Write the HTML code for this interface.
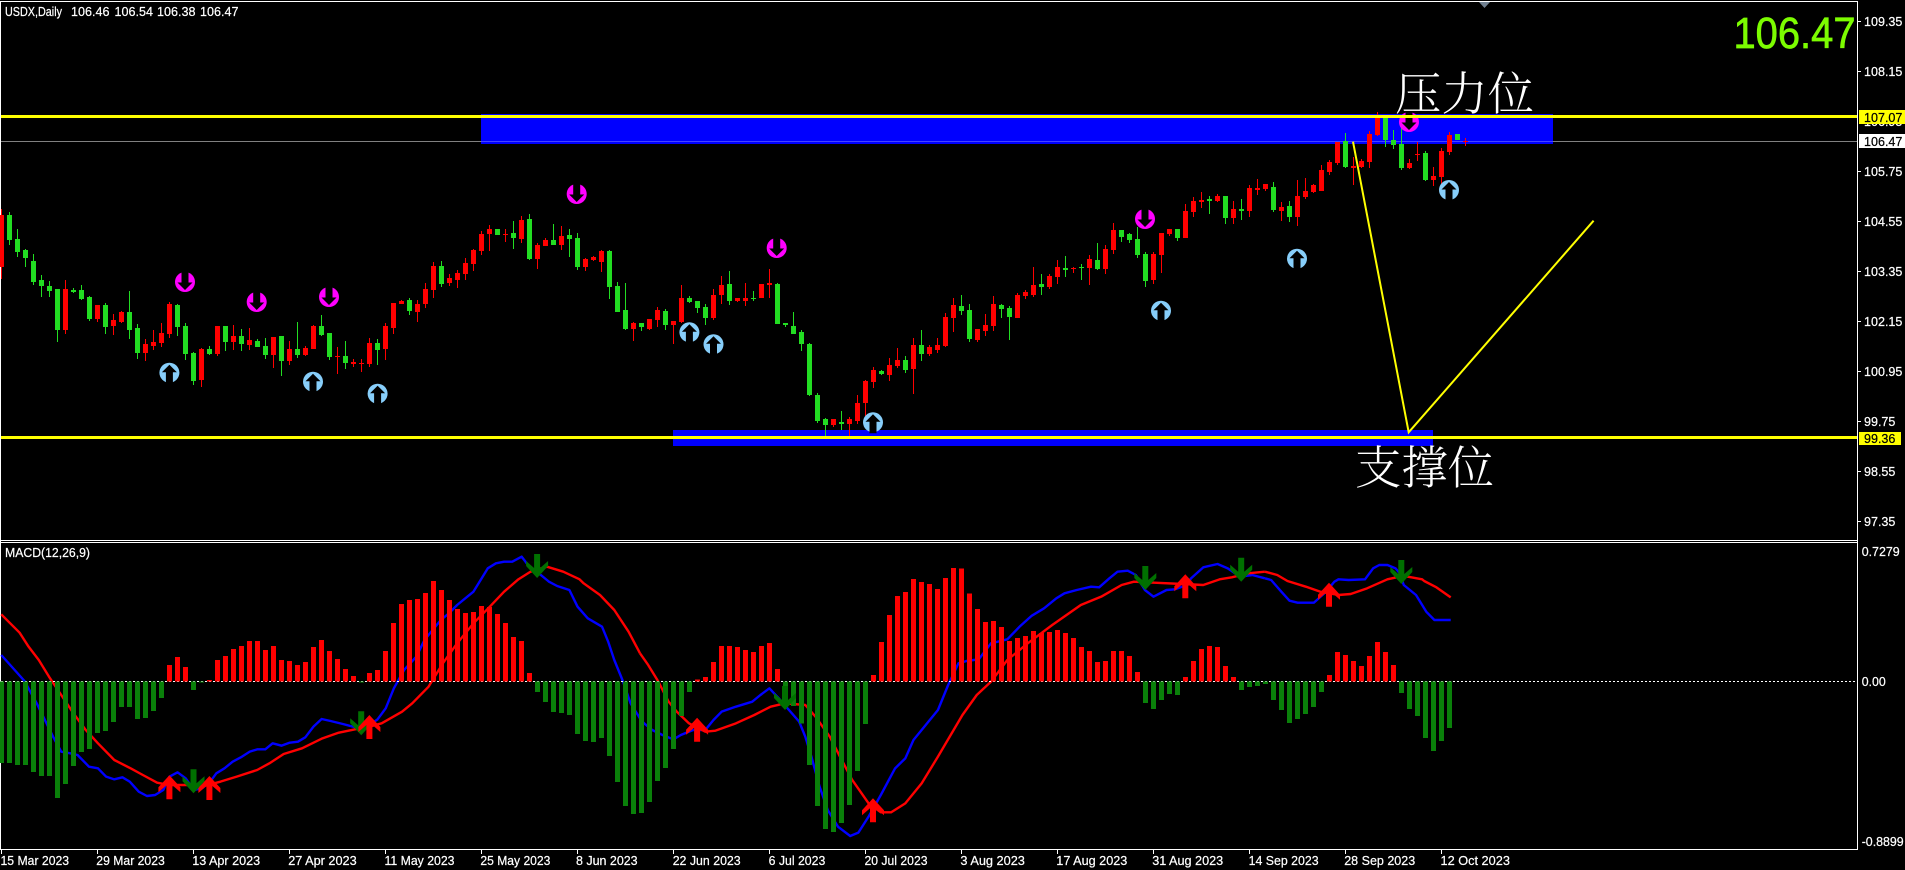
<!DOCTYPE html>
<html><head><meta charset="utf-8"><title>USDX,Daily</title>
<style>
html,body{margin:0;padding:0;background:#000;width:1905px;height:870px;overflow:hidden}
svg{display:block;position:absolute;left:0;top:0}
text{font-family:"Liberation Sans",sans-serif;fill:#fff;font-size:13px;stroke:#fff;stroke-width:.22px}
.cjk{font-family:"Liberation Serif","Noto Serif CJK SC",serif;font-size:46px;font-weight:300;stroke:none}
.k{fill:#000;stroke:#000}
</style></head><body>
<svg width="1905" height="870" viewBox="0 0 1905 870" xmlns="http://www.w3.org/2000/svg">
<defs>
<g id="m"><ellipse rx="10" ry="10" fill="#f0f"/><path d="M-3.5-11H3.5V0.5L7.5 0.5L0 8L-7.5 0.5L-3.5 0.5Z" fill="#000"/></g>
<g id="b"><ellipse rx="10" ry="10" fill="#87cefa"/><path d="M-3.5 11H3.5V-0.5L7.5-0.5L0-8L-7.5-0.5L-3.5-0.5Z" fill="#000"/></g>
<path id="u" d="M0 0L11 12V17L3 10V24H-3V10L-11 17V12Z" fill="#f00"/>
<path id="d" d="M0 0L11-12V-17L3-10V-24H-3V-10L-11-17V-12Z" fill="#007000"/>
</defs>
<rect width="1905" height="870" fill="#000"/>

<!-- frame -->
<g fill="#fff" shape-rendering="crispEdges">
<rect x="0" y="1" width="1858" height="1"/>
<rect x="0" y="1" width="1" height="849"/>
<rect x="1857" y="1" width="1" height="849"/>
<rect x="0" y="540" width="1858" height="1"/>
<rect x="0" y="542" width="1858" height="1"/>
<rect x="0" y="849" width="1858" height="1"/>
<path d="M1858 21h3v1h-3zM1858 71h3v1h-3zM1858 171h3v1h-3zM1858 221h3v1h-3zM1858 271h3v1h-3zM1858 321h3v1h-3zM1858 371h3v1h-3zM1858 421h3v1h-3zM1858 471h3v1h-3zM1858 521h3v1h-3z"/>
<path d="M1 850h1v4h-1zM97 850h1v4h-1zM193 850h1v4h-1zM289 850h1v4h-1zM385 850h1v4h-1zM481 850h1v4h-1zM577 850h1v4h-1zM673 850h1v4h-1zM769 850h1v4h-1zM865 850h1v4h-1zM961 850h1v4h-1zM1057 850h1v4h-1zM1153 850h1v4h-1zM1249 850h1v4h-1zM1345 850h1v4h-1zM1441 850h1v4h-1z"/>
</g>
<polygon points="1479,2 1490,2 1484.5,8" fill="#708090"/>

<!-- zones -->
<g shape-rendering="crispEdges">
<rect x="481" y="114" width="1072" height="30" fill="#00f"/>
<rect x="673" y="430" width="760" height="16" fill="#00f"/>
<rect x="1" y="141" width="1856" height="1" fill="#808080"/>
<rect x="481" y="141" width="1072" height="1" fill="#4444ff"/>
</g>

<!-- candles -->
<g shape-rendering="crispEdges">
<path fill="none" stroke="#f00" d="M1.5 209V279M65.5 280V334M97.5 305V322M113.5 314V335M121.5 311V323M145.5 339V361M153.5 330V350M161.5 323V347M169.5 302V338M201.5 348V387M217.5 326V356M233.5 325V350M249.5 328V350M273.5 337V368M289.5 341V365M305.5 346V356M313.5 325V349M337.5 347V374M353.5 359V367M361.5 359V372M369.5 338V367M385.5 323V360M393.5 303V334M401.5 300V304M417.5 300V322M425.5 283V308M433.5 262V298M449.5 274V286M457.5 270V288M465.5 258V280M473.5 249V271M481.5 231V255M489.5 225V251M505.5 229V242M521.5 216V243M537.5 243V269M545.5 238V246M561.5 226V250M585.5 258V271M593.5 256V261M601.5 250V272M633.5 322V341M649.5 319V330M657.5 307V327M673.5 321V344M681.5 285V323M713.5 289V320M721.5 276V304M737.5 298V302M745.5 283V306M761.5 284V298M769.5 269V298M833.5 419V427M849.5 417V436M857.5 395V424M865.5 380V416M873.5 367V388M889.5 358V381M897.5 348V368M913.5 338V394M929.5 345V356M937.5 338V353M945.5 313V347M953.5 298V332M977.5 329V342M985.5 314V336M993.5 296V331M1017.5 293V318M1025.5 290V299M1033.5 267V297M1049.5 274V289M1057.5 260V284M1073.5 267V273M1089.5 255V285M1105.5 245V274M1113.5 223V254M1153.5 252V284M1161.5 233V273M1169.5 229V236M1185.5 204V238M1193.5 197V217M1201.5 192V208M1217.5 194V202M1233.5 201V224M1249.5 185V217M1257.5 179V195M1265.5 184V191M1281.5 202V221M1297.5 180V226M1305.5 178V199M1313.5 184V193M1321.5 165V191M1329.5 160V175M1337.5 142V165M1353.5 157V185M1361.5 159V168M1369.5 131V168M1377.5 112V136M1409.5 159V169M1417.5 142V161M1433.5 167V186M1441.5 148V184M1449.5 132V155M1465.5 138V146"/>
<path fill="#f00" d="M-1 215h5V267h-5zM63 289h5V330h-5zM95 305h5V319h-5zM111 320h5V326h-5zM119 312h5V322h-5zM143 344h5V353h-5zM151 342h5V346h-5zM159 333h5V343h-5zM167 304h5V334h-5zM199 349h5V380h-5zM215 326h5V354h-5zM231 336h5V342h-5zM247 340h5V345h-5zM271 337h5V355h-5zM287 349h5V361h-5zM303 348h5V355h-5zM311 326h5V349h-5zM335 356h5V357h-5zM351 362h5V364h-5zM359 363h5V364h-5zM367 343h5V364h-5zM383 326h5V349h-5zM391 303h5V328h-5zM399 301h5V304h-5zM415 304h5V312h-5zM423 289h5V304h-5zM431 266h5V290h-5zM447 278h5V283h-5zM455 273h5V280h-5zM463 263h5V274h-5zM471 250h5V264h-5zM479 234h5V251h-5zM487 229h5V234h-5zM503 234h5V235h-5zM519 220h5V239h-5zM535 245h5V259h-5zM543 240h5V246h-5zM559 236h5V245h-5zM583 259h5V267h-5zM591 257h5V260h-5zM599 251h5V262h-5zM631 323h5V329h-5zM647 319h5V329h-5zM655 310h5V320h-5zM671 321h5V325h-5zM679 298h5V322h-5zM711 295h5V318h-5zM719 285h5V295h-5zM735 298h5V301h-5zM743 298h5V301h-5zM759 284h5V298h-5zM767 283h5V285h-5zM831 419h5V425h-5zM847 419h5V424h-5zM855 403h5V421h-5zM863 381h5V403h-5zM871 370h5V382h-5zM887 365h5V375h-5zM895 360h5V366h-5zM911 345h5V369h-5zM927 347h5V354h-5zM935 345h5V350h-5zM943 317h5V346h-5zM951 305h5V318h-5zM975 329h5V340h-5zM983 325h5V331h-5zM991 304h5V326h-5zM1015 295h5V318h-5zM1023 292h5V296h-5zM1031 285h5V295h-5zM1047 276h5V287h-5zM1055 267h5V277h-5zM1071 268h5V269h-5zM1087 259h5V268h-5zM1103 249h5V269h-5zM1111 230h5V250h-5zM1151 254h5V280h-5zM1159 233h5V255h-5zM1167 229h5V234h-5zM1183 211h5V238h-5zM1191 201h5V212h-5zM1199 200h5V202h-5zM1215 196h5V201h-5zM1231 209h5V218h-5zM1247 188h5V211h-5zM1255 188h5V190h-5zM1263 184h5V189h-5zM1279 207h5V211h-5zM1295 196h5V217h-5zM1303 191h5V197h-5zM1311 185h5V192h-5zM1319 170h5V191h-5zM1327 162h5V172h-5zM1335 142h5V163h-5zM1351 166h5V168h-5zM1359 161h5V167h-5zM1367 134h5V162h-5zM1375 117h5V135h-5zM1407 163h5V168h-5zM1415 154h5V155h-5zM1431 176h5V180h-5zM1439 151h5V177h-5zM1447 135h5V152h-5zM1463 141h5V142h-5z"/>
<path fill="none" stroke="#22dd22" d="M9.5 212V245M17.5 229V257M25.5 249V267M33.5 254V285M41.5 275V297M49.5 281V297M57.5 289V342M73.5 288V293M81.5 285V300M89.5 296V321M105.5 303V334M129.5 291V339M137.5 324V359M177.5 304V336M185.5 323V360M193.5 352V385M209.5 346V355M225.5 326V351M241.5 329V351M257.5 339V347M265.5 338V359M281.5 336V376M297.5 322V358M321.5 315V336M329.5 333V360M345.5 341V369M377.5 339V365M409.5 298V315M441.5 261V287M513.5 221V249M529.5 214V260M553.5 224V245M569.5 229V257M577.5 233V270M609.5 250V299M617.5 282V312M625.5 283V330M641.5 323V331M665.5 309V330M689.5 296V303M697.5 301V313M705.5 304V325M729.5 271V305M753.5 291V301M777.5 283V324M785.5 323V327M793.5 312V334M801.5 330V351M809.5 343V396M817.5 393V423M825.5 418V436M841.5 411V430M881.5 370V375M905.5 356V373M921.5 330V361M961.5 295V315M969.5 304V342M1001.5 304V318M1009.5 306V340M1041.5 274V295M1065.5 256V277M1081.5 264V280M1097.5 243V270M1121.5 230V242M1129.5 233V243M1137.5 227V258M1145.5 252V287M1177.5 229V241M1209.5 196V214M1225.5 196V224M1241.5 199V220M1273.5 182V212M1289.5 201V222M1345.5 133V168M1385.5 115V147M1393.5 130V149M1401.5 128V170M1425.5 151V181"/>
<path fill="#22dd22" d="M7 215h5V240h-5zM15 239h5V252h-5zM23 250h5V258h-5zM31 261h5V282h-5zM39 280h5V286h-5zM47 286h5V291h-5zM55 289h5V330h-5zM71 290h5V292h-5zM79 290h5V299h-5zM87 297h5V319h-5zM103 305h5V327h-5zM127 312h5V330h-5zM135 328h5V353h-5zM175 305h5V327h-5zM183 326h5V354h-5zM191 353h5V381h-5zM207 349h5V354h-5zM223 326h5V342h-5zM239 336h5V344h-5zM255 341h5V347h-5zM263 346h5V355h-5zM279 336h5V361h-5zM295 349h5V355h-5zM319 326h5V335h-5zM327 333h5V357h-5zM343 356h5V363h-5zM375 343h5V350h-5zM407 300h5V311h-5zM439 266h5V284h-5zM495 229h5V235h-5zM511 233h5V238h-5zM527 219h5V259h-5zM551 240h5V245h-5zM567 235h5V239h-5zM575 238h5V267h-5zM607 251h5V287h-5zM615 286h5V312h-5zM623 310h5V329h-5zM639 323h5V327h-5zM663 311h5V325h-5zM687 298h5V302h-5zM695 301h5V308h-5zM703 307h5V318h-5zM727 284h5V301h-5zM751 298h5V299h-5zM775 284h5V324h-5zM783 323h5V325h-5zM791 326h5V334h-5zM799 332h5V344h-5zM807 344h5V395h-5zM815 395h5V421h-5zM823 419h5V425h-5zM839 422h5V424h-5zM879 371h5V374h-5zM903 360h5V370h-5zM919 345h5V354h-5zM959 306h5V311h-5zM967 310h5V339h-5zM999 305h5V309h-5zM1007 308h5V317h-5zM1039 284h5V287h-5zM1063 268h5V270h-5zM1079 267h5V268h-5zM1095 260h5V269h-5zM1119 230h5V237h-5zM1127 234h5V240h-5zM1135 239h5V255h-5zM1143 254h5V281h-5zM1175 229h5V238h-5zM1207 199h5V201h-5zM1223 196h5V218h-5zM1239 209h5V211h-5zM1271 187h5V210h-5zM1287 206h5V217h-5zM1343 141h5V167h-5zM1383 117h5V140h-5zM1391 140h5V145h-5zM1399 144h5V168h-5zM1423 153h5V180h-5zM1455 134h5V140h-5z"/>
</g>

<!-- markers -->
<use href="#m" x="185" y="282"/><use href="#m" x="256.7" y="302"/><use href="#m" x="329" y="297"/><use href="#m" x="576.7" y="194"/><use href="#m" x="776.7" y="248"/><use href="#m" x="1145" y="219"/><use href="#m" x="1409" y="122"/>
<use href="#b" x="169.4" y="372.7"/><use href="#b" x="313" y="381.7"/><use href="#b" x="377.6" y="393.7"/><use href="#b" x="689.4" y="332.3"/><use href="#b" x="713.5" y="344.3"/><use href="#b" x="873" y="422.3"/><use href="#b" x="1161" y="310.7"/><use href="#b" x="1297" y="258.7"/><use href="#b" x="1449" y="190"/>

<!-- levels -->
<g shape-rendering="crispEdges" fill="#ff0">
<rect x="1" y="115" width="1856" height="3"/>
<rect x="1" y="436" width="1856" height="3"/>
</g>
<polyline points="1353,141.7 1408.7,432.3 1593.6,220.7" fill="none" stroke="#ff0" stroke-width="2"/>

<!-- MACD lines -->
<g fill="none" stroke-linejoin="round">
<g transform="translate(0,580) scale(.40816,.33333)">
<polyline stroke="#00f" stroke-width="2.4" vector-effect="non-scaling-stroke" points="3,225 25,255 60,303 90,370 110,420 130,470 150,515 172,520 190,525 218,560 240,565 260,590 280,598 300,592 318,605 340,635 360,648 380,645 400,630 415,590 435,577 455,595 475,630 495,625 515,605 530,580 550,565 570,545 590,532 612,515 630,508 650,508 668,490 690,497 710,488 730,485 748,472 768,440 788,417 810,423 840,432 865,440 885,445 905,435 925,418 945,385 965,325 990,270 1020,230 1040,180 1060,150 1080,120 1100,100 1120,75 1140,55 1160,35 1180,-5 1195,-35 1215,-50 1235,-55 1255,-55 1278,-70 1300,-35 1320,-20 1340,0 1345,5 1365,18 1395,30 1415,80 1440,115 1475,140 1490,185 1505,240 1525,300 1545,370 1568,415"/>
<polyline stroke="#f00" stroke-width="2.4" vector-effect="non-scaling-stroke" points="3,103 25,130 48,158 70,200 95,240 120,290 150,345 180,400 210,450 240,490 280,540 320,565 350,585 385,608 415,615 460,615 500,618 540,605 580,590 630,570 660,550 695,522 740,505 790,475 830,458 870,448 905,440 935,430 985,395 1010,370 1050,320 1085,250 1120,190 1160,130 1200,80 1235,35 1270,-2 1300,-25 1340,-40 1380,-25 1420,-2 1430,10 1470,45 1505,90 1540,155 1568,220"/>
</g>
<g transform="translate(640,580) scale(.40816,.33333)">
<polyline stroke="#00f" stroke-width="2.4" vector-effect="non-scaling-stroke" points="0,415 10,430 30,450 55,465 82,478 100,465 130,450 160,450 180,420 200,395 235,380 275,365 295,345 317,325 340,355 365,390 390,425 405,470 420,530 440,620 460,690 485,740 515,768 535,758 560,710 590,645 625,565 650,535 670,480 700,435 730,390 755,315 780,250 800,243 830,238 860,190 900,178 930,140 960,107 990,85 1020,55 1040,40 1070,30 1105,20 1125,22 1150,-5 1170,-25 1195,-28 1215,-15 1237,30 1258,50 1290,30 1310,28 1340,15 1350,-5 1380,-38 1415,-48 1440,-35 1470,-10 1500,-15 1531,-5"/>
<polyline stroke="#f00" stroke-width="2.4" vector-effect="non-scaling-stroke" points="0,220 20,255 45,305 70,365 90,395 120,430 160,455 185,452 235,430 280,405 320,380 355,370 405,375 430,410 465,470 490,530 520,600 560,670 590,697 615,697 650,670 690,610 730,530 790,405 825,345 860,305 900,240 950,190 1010,135 1080,75 1130,50 1180,15 1210,5 1260,8 1330,12 1380,15 1420,-2 1450,-8 1490,-20 1531,-25"/>
</g>
<g transform="translate(1265,580) scale(.40816,.33333)">
<polyline stroke="#00f" stroke-width="2.4" vector-effect="non-scaling-stroke" points="0,-5 15,0 40,35 60,62 80,68 120,68 150,35 170,5 180,-2 205,0 245,-2 265,-35 280,-45 300,-45 320,-35 330,-20 340,15 370,45 395,95 415,120 455,120"/>
<polyline stroke="#f00" stroke-width="2.4" vector-effect="non-scaling-stroke" points="0,-25 30,-15 55,3 100,20 135,35 180,45 210,42 250,25 300,-2 330,-10 350,-10 385,-2 390,3 420,22 455,52"/>
</g>
</g>

<!-- zero line -->
<line x1="1" y1="681.5" x2="1857" y2="681.5" stroke="#fff" stroke-width="1" stroke-dasharray="2 2" shape-rendering="crispEdges"/>

<!-- histogram -->
<g transform="translate(0,580) scale(1,.33333)" shape-rendering="crispEdges">
<path fill="#f00" d="M167 255h5V304h-5zM175 231h5V304h-5zM183 261h5V304h-5zM207 300h5V304h-5zM215 240h5V304h-5zM223 228h5V304h-5zM231 207h5V304h-5zM239 198h5V304h-5zM247 183h5V304h-5zM255 183h5V304h-5zM263 210h5V304h-5zM271 198h5V304h-5zM279 240h5V304h-5zM287 243h5V304h-5zM295 255h5V304h-5zM303 246h5V304h-5zM311 201h5V304h-5zM319 180h5V304h-5zM327 213h5V304h-5zM335 237h5V304h-5zM343 267h5V304h-5zM351 288h5V304h-5zM367 279h5V304h-5zM375 270h5V304h-5zM383 213h5V304h-5zM391 129h5V304h-5zM399 72h5V304h-5zM407 60h5V304h-5zM415 57h5V304h-5zM423 39h5V304h-5zM431 3h5V304h-5zM439 30h5V304h-5zM447 60h5V304h-5zM455 87h5V304h-5zM463 99h5V304h-5zM471 96h5V304h-5zM479 78h5V304h-5zM487 81h5V304h-5zM495 102h5V304h-5zM503 129h5V304h-5zM511 171h5V304h-5zM519 183h5V304h-5zM527 279h5V304h-5zM695 298h5V304h-5zM703 291h5V304h-5zM711 246h5V304h-5zM719 198h5V304h-5zM727 198h5V304h-5zM735 201h5V304h-5zM743 210h5V304h-5zM751 216h5V304h-5zM759 198h5V304h-5zM767 189h5V304h-5zM775 267h5V304h-5zM871 285h5V304h-5zM879 186h5V304h-5zM887 105h5V304h-5zM895 48h5V304h-5zM903 36h5V304h-5zM911 -3h5V304h-5zM919 6h5V304h-5zM927 12h5V304h-5zM935 27h5V304h-5zM943 -6h5V304h-5zM951 -36h5V304h-5zM959 -34h5V304h-5zM967 40h5V304h-5zM975 87h5V304h-5zM983 126h5V304h-5zM991 123h5V304h-5zM999 141h5V304h-5zM1007 183h5V304h-5zM1015 174h5V304h-5zM1023 168h5V304h-5zM1031 153h5V304h-5zM1039 159h5V304h-5zM1047 156h5V304h-5zM1055 150h5V304h-5zM1063 159h5V304h-5zM1071 174h5V304h-5zM1079 201h5V304h-5zM1087 213h5V304h-5zM1095 246h5V304h-5zM1103 243h5V304h-5zM1111 213h5V304h-5zM1119 213h5V304h-5zM1127 228h5V304h-5zM1135 276h5V304h-5zM1183 291h5V304h-5zM1191 243h5V304h-5zM1199 207h5V304h-5zM1207 198h5V304h-5zM1215 201h5V304h-5zM1223 258h5V304h-5zM1231 291h5V304h-5zM1327 285h5V304h-5zM1335 216h5V304h-5zM1343 225h5V304h-5zM1351 243h5V304h-5zM1359 258h5V304h-5zM1367 228h5V304h-5zM1375 186h5V304h-5zM1383 216h5V304h-5zM1391 255h5V304h-5z"/>
<path fill="#0a800a" d="M-1 549h5V304h-5zM7 549h5V304h-5zM15 555h5V304h-5zM23 555h5V304h-5zM31 576h5V304h-5zM39 588h5V304h-5zM47 588h5V304h-5zM55 654h5V304h-5zM63 612h5V304h-5zM71 558h5V304h-5zM79 516h5V304h-5zM87 507h5V304h-5zM95 459h5V304h-5zM103 453h5V304h-5zM111 426h5V304h-5zM119 381h5V304h-5zM127 381h5V304h-5zM135 417h5V304h-5zM143 414h5V304h-5zM151 393h5V304h-5zM159 354h5V304h-5zM191 330h5V304h-5zM199 308h5V304h-5zM359 308h5V304h-5zM535 336h5V304h-5zM543 366h5V304h-5zM551 396h5V304h-5zM559 399h5V304h-5zM567 405h5V304h-5zM575 462h5V304h-5zM583 483h5V304h-5zM591 486h5V304h-5zM599 474h5V304h-5zM607 528h5V304h-5zM615 606h5V304h-5zM623 678h5V304h-5zM631 702h5V304h-5zM639 699h5V304h-5zM647 666h5V304h-5zM655 603h5V304h-5zM663 564h5V304h-5zM671 507h5V304h-5zM679 408h5V304h-5zM687 336h5V304h-5zM783 366h5V304h-5zM791 378h5V304h-5zM799 430h5V304h-5zM807 555h5V304h-5zM815 678h5V304h-5zM823 747h5V304h-5zM831 756h5V304h-5zM839 729h5V304h-5zM847 675h5V304h-5zM855 573h5V304h-5zM863 432h5V304h-5zM1143 369h5V304h-5zM1151 387h5V304h-5zM1159 360h5V304h-5zM1167 342h5V304h-5zM1175 345h5V304h-5zM1239 330h5V304h-5zM1247 321h5V304h-5zM1255 318h5V304h-5zM1263 312h5V304h-5zM1271 360h5V304h-5zM1279 390h5V304h-5zM1287 429h5V304h-5zM1295 417h5V304h-5zM1303 402h5V304h-5zM1311 381h5V304h-5zM1319 336h5V304h-5zM1399 339h5V304h-5zM1407 387h5V304h-5zM1415 408h5V304h-5zM1423 474h5V304h-5zM1431 513h5V304h-5zM1439 483h5V304h-5zM1447 444h5V304h-5z"/>
</g>

<!-- arrows -->
<use href="#d" x="193.5" y="793.3"/><use href="#d" x="361.2" y="735.3"/><use href="#d" x="785" y="710"/><use href="#d" x="1145.3" y="590"/><use href="#d" x="1241.2" y="581.7"/><use href="#d" x="1401.3" y="584"/><use href="#d" x="537.1" y="578"/>
<use href="#u" x="169.4" y="775.3"/><use href="#u" x="209.4" y="776"/><use href="#u" x="369.4" y="715"/><use href="#u" x="697.1" y="717.7"/><use href="#u" x="873" y="798.3"/><use href="#u" x="1185.3" y="574.3"/><use href="#u" x="1329" y="582.7"/>

<!-- header -->
<text x="5" y="16" textLength="57" lengthAdjust="spacingAndGlyphs">USDX,Daily</text>
<text x="71" y="16" textLength="38.5" lengthAdjust="spacingAndGlyphs">106.46</text>
<text x="114.5" y="16" textLength="38.5" lengthAdjust="spacingAndGlyphs">106.54</text>
<text x="157" y="16" textLength="38.5" lengthAdjust="spacingAndGlyphs">106.38</text>
<text x="200" y="16" textLength="38.5" lengthAdjust="spacingAndGlyphs">106.47</text>
<text x="5" y="557" textLength="85" lengthAdjust="spacingAndGlyphs">MACD(12,26,9)</text>

<!-- big price & annotations -->
<text x="1733.5" y="48" textLength="122" lengthAdjust="spacingAndGlyphs" style="font-size:44px;fill:#7cfc00;stroke:#7cfc00;stroke-width:.7px">106.47</text>
<text class="cjk" x="1395" y="110" textLength="139" lengthAdjust="spacingAndGlyphs">压力位</text>
<text class="cjk" x="1355" y="484" textLength="139" lengthAdjust="spacingAndGlyphs">支撑位</text>

<!-- price axis -->
<g>
<text x="1864" y="26" textLength="38.4" lengthAdjust="spacingAndGlyphs">109.35</text>
<text x="1864" y="76" textLength="38.4" lengthAdjust="spacingAndGlyphs">108.15</text>
<text x="1864" y="126" textLength="38.4" lengthAdjust="spacingAndGlyphs">106.95</text>
<text x="1864" y="176" textLength="38.4" lengthAdjust="spacingAndGlyphs">105.75</text>
<text x="1864" y="226" textLength="38.4" lengthAdjust="spacingAndGlyphs">104.55</text>
<text x="1864" y="276" textLength="38.4" lengthAdjust="spacingAndGlyphs">103.35</text>
<text x="1864" y="326" textLength="38.4" lengthAdjust="spacingAndGlyphs">102.15</text>
<text x="1864" y="376" textLength="38.4" lengthAdjust="spacingAndGlyphs">100.95</text>
<text x="1864" y="426" textLength="31.4" lengthAdjust="spacingAndGlyphs">99.75</text>
<text x="1864" y="476" textLength="31.4" lengthAdjust="spacingAndGlyphs">98.55</text>
<text x="1864" y="526" textLength="31.4" lengthAdjust="spacingAndGlyphs">97.35</text>
<rect x="1859" y="110" width="46" height="14" fill="#ff0"/>
<text class="k" x="1864" y="122" textLength="38.4" lengthAdjust="spacingAndGlyphs">107.07</text>
<rect x="1859" y="134" width="46" height="14" fill="#fff"/>
<text class="k" x="1864" y="146" textLength="38.4" lengthAdjust="spacingAndGlyphs">106.47</text>
<rect x="1859" y="432" width="42" height="13" fill="#ff0"/>
<text class="k" x="1864" y="443" textLength="31.4" lengthAdjust="spacingAndGlyphs">99.36</text>
<text x="1861.7" y="556" textLength="38" lengthAdjust="spacingAndGlyphs">0.7279</text>
<text x="1861.7" y="686" textLength="24" lengthAdjust="spacingAndGlyphs">0.00</text>
<text x="1861.7" y="846" textLength="42" lengthAdjust="spacingAndGlyphs">-0.8899</text>
</g>

<!-- time axis -->
<g>
<text x="0.5" y="865" textLength="68.6" lengthAdjust="spacingAndGlyphs">15 Mar 2023</text>
<text x="96.3" y="865" textLength="68.5" lengthAdjust="spacingAndGlyphs">29 Mar 2023</text>
<text x="192.2" y="865" textLength="68" lengthAdjust="spacingAndGlyphs">13 Apr 2023</text>
<text x="288.2" y="865" textLength="68.5" lengthAdjust="spacingAndGlyphs">27 Apr 2023</text>
<text x="384.5" y="865" textLength="70" lengthAdjust="spacingAndGlyphs">11 May 2023</text>
<text x="480.4" y="865" textLength="70" lengthAdjust="spacingAndGlyphs">25 May 2023</text>
<text x="576" y="865" textLength="61.6" lengthAdjust="spacingAndGlyphs">8 Jun 2023</text>
<text x="672.7" y="865" textLength="68" lengthAdjust="spacingAndGlyphs">22 Jun 2023</text>
<text x="768.6" y="865" textLength="56.7" lengthAdjust="spacingAndGlyphs">6 Jul 2023</text>
<text x="864.5" y="865" textLength="63" lengthAdjust="spacingAndGlyphs">20 Jul 2023</text>
<text x="960.4" y="865" textLength="64.5" lengthAdjust="spacingAndGlyphs">3 Aug 2023</text>
<text x="1056.3" y="865" textLength="71" lengthAdjust="spacingAndGlyphs">17 Aug 2023</text>
<text x="1152.2" y="865" textLength="71" lengthAdjust="spacingAndGlyphs">31 Aug 2023</text>
<text x="1248.6" y="865" textLength="70" lengthAdjust="spacingAndGlyphs">14 Sep 2023</text>
<text x="1344.2" y="865" textLength="71" lengthAdjust="spacingAndGlyphs">28 Sep 2023</text>
<text x="1440.5" y="865" textLength="69.4" lengthAdjust="spacingAndGlyphs">12 Oct 2023</text>
</g>
</svg>
</body></html>
